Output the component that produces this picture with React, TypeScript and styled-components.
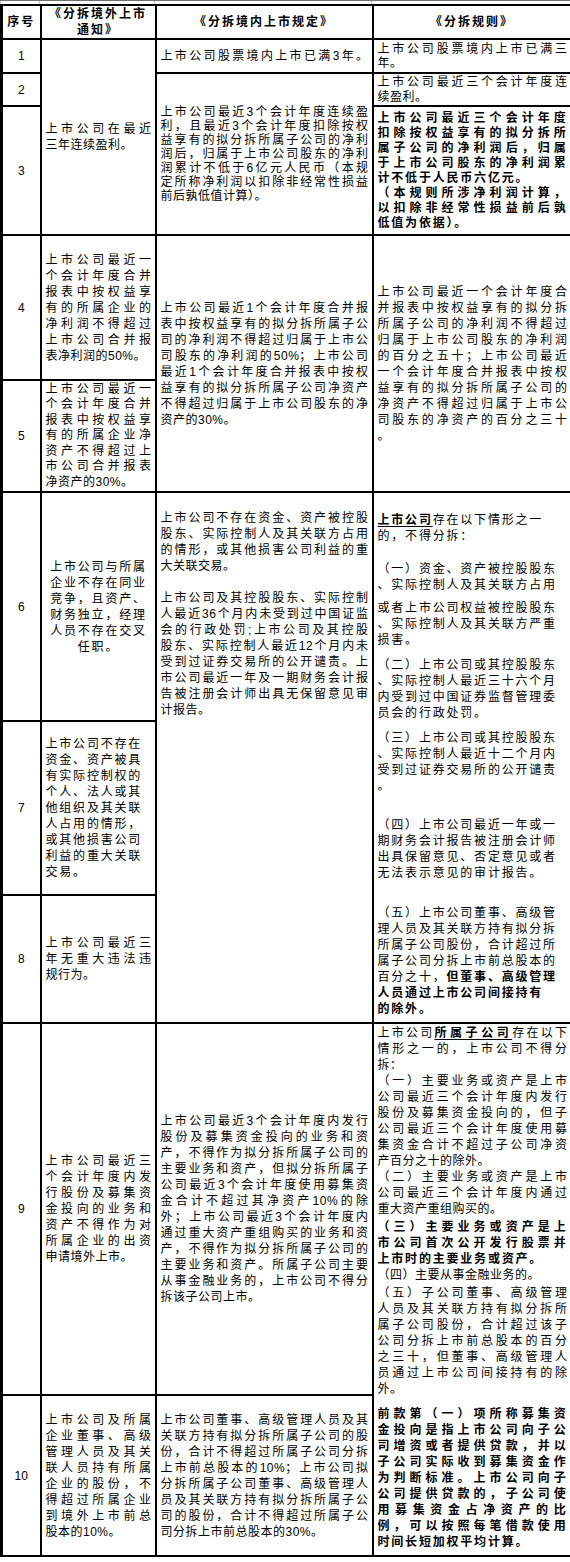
import React from 'react';
import styled, { createGlobalStyle, css } from 'styled-components';

type Seg = string | { b: string; u?: boolean };
type LineData = Seg | Seg[];
type ParaData = { gap?: number; full?: boolean; lines: LineData[] };
type Mode = 'justify' | 'left' | 'center';
type CellData = {
    paras: ParaData[];
    mode?: Mode;
    lh?: number;
    ls?: number;
    top?: number;
    rowSpan?: number;
};
type RowData = { h: number; no: string; cells: CellData[] };

const GlobalStyle = createGlobalStyle`
    html, body {
        margin: 0;
        padding: 0;
        background: #fff;
    }
    body {
        font-family: "Liberation Sans", "Noto Sans CJK SC", sans-serif;
        color: #000;
    }
`;

const Page = styled.div`
    width: 570px;
    padding-bottom: 8px;
`;

const PrevRow = styled.div`
    display: grid;
    grid-template-columns: 39px 115px 217px 199px;
    height: 4px;
    box-sizing: border-box;
    border-top: 1px solid #6e6e6e;
`;

const PrevCell = styled.div`
    border-left: 1px solid #c4c4c4;
`;

const Table = styled.table`
    width: 570px;
    border-collapse: collapse;
    table-layout: fixed;
`;

const Col = styled.col<{ $w: number }>`
    width: ${(p) => p.$w}px;
`;

const Row = styled.tr<{ $h: number }>`
    height: ${(p) => p.$h}px;
`;

const HeadCell = styled.th<{ $first?: boolean }>`
    border: 2px solid #000;
    border-left-width: ${(p) => (p.$first ? 3 : 2)}px;
    padding: 0 2px;
    font-family: "Liberation Sans", "Noto Sans CJK SC", sans-serif;
    font-size: 12px;
    font-weight: 700;
    line-height: 16px;
    letter-spacing: 2px;
    text-align: center;
    vertical-align: middle;
`;

const NoCell = styled.td`
    border: 2px solid #000;
    border-left-width: 3px;
    padding: 0;
    font-family: "Liberation Sans", Arial, sans-serif;
    font-size: 12px;
    text-align: center;
    vertical-align: middle;
`;

const TextCell = styled.td<{ $mode: Mode; $lh: number; $ls: number; $top?: number }>`
    border: 2px solid #000;
    padding: ${(p) => p.$top ?? 0}px 3px 0 4px;
    vertical-align: ${(p) => (p.$top !== undefined ? 'top' : 'middle')};
    font-size: 12px;
    line-height: ${(p) => p.$lh}px;
    letter-spacing: ${(p) => p.$ls}px;
    text-align: ${(p) => (p.$mode === 'center' ? 'center' : 'left')};
`;

const Para = styled.div<{ $gap: number }>`
    margin-top: ${(p) => p.$gap}px;
`;

const Line = styled.div<{ $j: boolean }>`
    ${(p) =>
        p.$j &&
        css`
            text-align: justify;
            text-align-last: justify;
        `}
`;

const Em = styled.span<{ $u?: boolean }>`
    font-weight: 700;
    letter-spacing: 1.8px;
    text-decoration: ${(p) => (p.$u ? 'underline' : 'none')};
    text-underline-offset: 2px;
`;

const P = (...lines: LineData[]): ParaData => ({ lines });
const G = (gap: number, ...lines: LineData[]): ParaData => ({ gap, lines });
const B = (gap: number, ...lines: string[]): ParaData => ({ gap, lines: lines.map((b) => ({ b })) });

const rows: RowData[] = [
    {
        h: 34,
        no: '1',
        cells: [
            { rowSpan: 3, paras: [P('上市公司在最近', '三年连续盈利。')] },
            { paras: [{ full: true, lines: ['上市公司股票境内上市已满3年。'] }] },
            { lh: 14, paras: [P('上市公司股票境内上市已满三', '年。')] },
        ],
    },
    {
        h: 33,
        no: '2',
        cells: [
            {
                rowSpan: 2,
                lh: 14,
                paras: [
                    P(
                        '上市公司最近3个会计年度连续盈',
                        '利，且最近3个会计年度扣除按权',
                        '益享有的拟分拆所属子公司的净利',
                        '润后，归属于上市公司股东的净利',
                        '润累计不低于6亿元人民币（本规',
                        '定所称净利润以扣除非经常性损益',
                        '前后孰低值计算）。'
                    ),
                ],
            },
            { lh: 15, paras: [P('上市公司最近三个会计年度连', '续盈利。')] },
        ],
    },
    {
        h: 129,
        no: '3',
        cells: [
            {
                lh: 15,
                paras: [
                    B(
                        0,
                        '上市公司最近三个会计年度',
                        '扣除按权益享有的拟分拆所',
                        '属子公司的净利润后，归属',
                        '于上市公司股东的净利润累',
                        '计不低于人民币六亿元。'
                    ),
                    B(0, '（本规则所涉净利润计算，', '以扣除非经常性损益前后孰', '低值为依据）。'),
                ],
            },
        ],
    },
    {
        h: 145,
        no: '4',
        cells: [
            {
                paras: [
                    P(
                        '上市公司最近一',
                        '个会计年度合并',
                        '报表中按权益享',
                        '有的所属企业的',
                        '净利润不得超过',
                        '上市公司合并报',
                        '表净利润的50%。'
                    ),
                ],
            },
            {
                rowSpan: 2,
                paras: [
                    P(
                        '上市公司最近1个会计年度合并报',
                        '表中按权益享有的拟分拆所属子公',
                        '司的净利润不得超过归属于上市公',
                        '司股东的净利润的50%；上市公司',
                        '最近1个会计年度合并报表中按权',
                        '益享有的拟分拆所属子公司净资产',
                        '不得超过归属于上市公司股东的净',
                        '资产的30%。'
                    ),
                ],
            },
            {
                rowSpan: 2,
                paras: [
                    P(
                        '上市公司最近一个会计年度合',
                        '并报表中按权益享有的拟分拆',
                        '所属子公司的净利润不得超过',
                        '归属于上市公司股东的净利润',
                        '的百分之五十；上市公司最近',
                        '一个会计年度合并报表中按权',
                        '益享有的拟分拆所属子公司的',
                        '净资产不得超过归属于上市公',
                        '司股东的净资产的百分之三十',
                        '。'
                    ),
                ],
            },
        ],
    },
    {
        h: 112,
        no: '5',
        cells: [
            {
                lh: 15.5,
                paras: [
                    P(
                        '上市公司最近一',
                        '个会计年度合并',
                        '报表中按权益享',
                        '有的所属企业净',
                        '资产不得超过上',
                        '市公司合并报表',
                        '净资产的30%。'
                    ),
                ],
            },
        ],
    },
    {
        h: 229,
        no: '6',
        cells: [
            {
                mode: 'center',
                ls: 1.8,
                paras: [P('上市公司与所属', '企业不存在同业', '竞争，且资产、', '财务独立，经理', '人员不存在交叉', '任职。')],
            },
            {
                rowSpan: 3,
                top: 17,
                paras: [
                    P(
                        '上市公司不存在资金、资产被控股',
                        '股东、实际控制人及其关联方占用',
                        '的情形，或其他损害公司利益的重',
                        '大关联交易。'
                    ),
                    G(
                        16,
                        '上市公司及其控股股东、实际控制',
                        '人最近36个月内未受到过中国证监',
                        '会的行政处罚;上市公司及其控股',
                        '股东、实际控制人最近12个月内未',
                        '受到过证券交易所的公开谴责。上',
                        '市公司最近一年及一期财务会计报',
                        '告被注册会计师出具无保留意见审',
                        '计报告。'
                    ),
                ],
            },
            {
                rowSpan: 3,
                mode: 'left',
                ls: 1.8,
                top: 19,
                paras: [
                    P([{ b: '上市公司', u: true }, '存在以下情形之一'], '的，不得分拆：'),
                    G(17, '（一）资金、资产被控股股东', '、实际控制人及其关联方占用'),
                    G(7, '或者上市公司权益被控股股东', '、实际控制人及其关联方严重', '损害。'),
                    G(
                        9,
                        '（二）上市公司或其控股股东',
                        '、实际控制人最近三十六个月',
                        '内受到过中国证券监督管理委',
                        '员会的行政处罚。'
                    ),
                    G(
                        9,
                        '（三）上市公司或其控股股东',
                        '、实际控制人最近十二个月内',
                        '受到过证券交易所的公开谴责',
                        '。'
                    ),
                    G(
                        23,
                        '（四）上市公司最近一年或一',
                        '期财务会计报告被注册会计师',
                        '出具保留意见、否定意见或者',
                        '无法表示意见的审计报告。'
                    ),
                    G(
                        24,
                        '（五）上市公司董事、高级管',
                        '理人员及其关联方持有拟分拆',
                        '所属子公司股份，合计超过所',
                        '属子公司分拆上市前总股本的',
                        ['百分之十，', { b: '但董事、高级管理' }],
                        [{ b: '人员通过上市公司间接持有' }],
                        [{ b: '的除外。' }]
                    ),
                ],
            },
        ],
    },
    {
        h: 174,
        no: '7',
        cells: [
            {
                mode: 'left',
                ls: 1.8,
                paras: [
                    P(
                        '上市公司不存在',
                        '资金、资产被具',
                        '有实际控制权的',
                        '个人、法人或其',
                        '他组织及其关联',
                        '人占用的情形，',
                        '或其他损害公司',
                        '利益的重大关联',
                        '交易。'
                    ),
                ],
            },
        ],
    },
    {
        h: 128,
        no: '8',
        cells: [{ paras: [P('上市公司最近三', '年无重大违法违', '规行为。')] }],
    },
    {
        h: 372,
        no: '9',
        cells: [
            {
                paras: [
                    P(
                        '上市公司最近三',
                        '个会计年度内发',
                        '行股份及募集资',
                        '金投向的业务和',
                        '资产不得作为对',
                        '所属企业的出资',
                        '申请境外上市。'
                    ),
                ],
            },
            {
                paras: [
                    P(
                        '上市公司最近3个会计年度内发行',
                        '股份及募集资金投向的业务和资',
                        '产，不得作为拟分拆所属子公司的',
                        '主要业务和资产，但拟分拆所属子',
                        '公司最近3个会计年度使用募集资',
                        '金合计不超过其净资产10%的除',
                        '外；上市公司最近3个会计年度内',
                        '通过重大资产重组购买的业务和资',
                        '产，不得作为拟分拆所属子公司的',
                        '主要业务和资产。所属子公司主要',
                        '从事金融业务的，上市公司不得分',
                        '拆该子公司上市。'
                    ),
                ],
            },
            {
                rowSpan: 2,
                top: 1,
                paras: [
                    P(['上市公司', { b: '所属子公司', u: true }, '存在以下'], '情形之一的，上市公司不得分', '拆：'),
                    P(
                        '（一）主要业务或资产是上市',
                        '公司最近三个会计年度内发行',
                        '股份及募集资金投向的，但子',
                        '公司最近三个会计年度使用募',
                        '集资金合计不超过子公司净资',
                        '产百分之十的除外。'
                    ),
                    P('（二）主要业务或资产是上市', '公司最近三个会计年度内通过', '重大资产重组购买的。'),
                    B(2, '（三）主要业务或资产是上', '市公司首次公开发行股票并', '上市时的主要业务或资产。'),
                    P('（四）主要从事金融业务的。'),
                    G(
                        2,
                        '（五）子公司董事、高级管理',
                        '人员及其关联方持有拟分拆所',
                        '属子公司股份，合计超过该子',
                        '公司分拆上市前总股本的百分',
                        '之三十，但董事、高级管理人',
                        '员通过上市公司间接持有的除',
                        '外。'
                    ),
                    B(
                        9,
                        '前款第（一）项所称募集资',
                        '金投向是指上市公司向子公',
                        '司增资或者提供贷款，并以',
                        '子公司实际收到募集资金作',
                        '为判断标准。上市公司向子',
                        '公司提供贷款的，子公司使',
                        '用募集资金占净资产的比',
                        '例，可以按照每笔借款使用',
                        '时间长短加权平均计算。'
                    ),
                ],
            },
        ],
    },
    {
        h: 161,
        no: '10',
        cells: [
            {
                paras: [
                    P(
                        '上市公司及所属',
                        '企业董事、高级',
                        '管理人员及其关',
                        '联人员持有所属',
                        '企业的股份，不',
                        '得超过所属企业',
                        '到境外上市前总',
                        '股本的10%。'
                    ),
                ],
            },
            {
                paras: [
                    P(
                        '上市公司董事、高级管理人员及其',
                        '关联方持有拟分拆所属子公司的股',
                        '份，合计不得超过所属子公司分拆',
                        '上市前总股本的10%；上市公司拟',
                        '分拆所属子公司董事、高级管理人',
                        '员及其关联方持有拟分拆所属子公',
                        '司的股份，合计不得超过所属子公',
                        '司分拆上市前总股本的30%。'
                    ),
                ],
            },
        ],
    },
];

const renderSeg = (s: Seg, i: number) =>
    typeof s === 'string' ? (
        <React.Fragment key={i}>{s}</React.Fragment>
    ) : (
        <Em key={i} $u={s.u}>
            {s.b}
        </Em>
    );

const TextBlock: React.FC<{ cell: CellData }> = ({ cell }) => {
    const mode = cell.mode ?? 'justify';
    return (
        <TextCell rowSpan={cell.rowSpan} $mode={mode} $lh={cell.lh ?? 16} $ls={cell.ls ?? 0.5} $top={cell.top}>
            {cell.paras.map((para, pi) => (
                <Para key={pi} $gap={para.gap ?? 0}>
                    {para.lines.map((line, li) => {
                        const segs = Array.isArray(line) ? line : [line];
                        const last = li === para.lines.length - 1;
                        return (
                            <Line key={li} $j={mode === 'justify' && (!last || !!para.full)}>
                                {segs.map(renderSeg)}
                            </Line>
                        );
                    })}
                </Para>
            ))}
        </TextCell>
    );
};

const App: React.FC = () => {
    return (
        <Page>
            <GlobalStyle />
            <PrevRow>
                <PrevCell />
                <PrevCell />
                <PrevCell />
                <PrevCell />
            </PrevRow>
            <Table>
                <colgroup>
                    <Col $w={39} />
                    <Col $w={115} />
                    <Col $w={217} />
                    <Col $w={199} />
                </colgroup>
                <tbody>
                    <Row $h={31}>
                        <HeadCell $first>序号</HeadCell>
                        <HeadCell>
                            《分拆境外上市
                            <br />
                            通知》
                        </HeadCell>
                        <HeadCell>《分拆境内上市规定》</HeadCell>
                        <HeadCell>《分拆规则》</HeadCell>
                    </Row>
                    {rows.map((row) => (
                        <Row key={row.no} $h={row.h}>
                            <NoCell>{row.no}</NoCell>
                            {row.cells.map((cell, ci) => (
                                <TextBlock key={ci} cell={cell} />
                            ))}
                        </Row>
                    ))}
                </tbody>
            </Table>
        </Page>
    );
};

export default App;
